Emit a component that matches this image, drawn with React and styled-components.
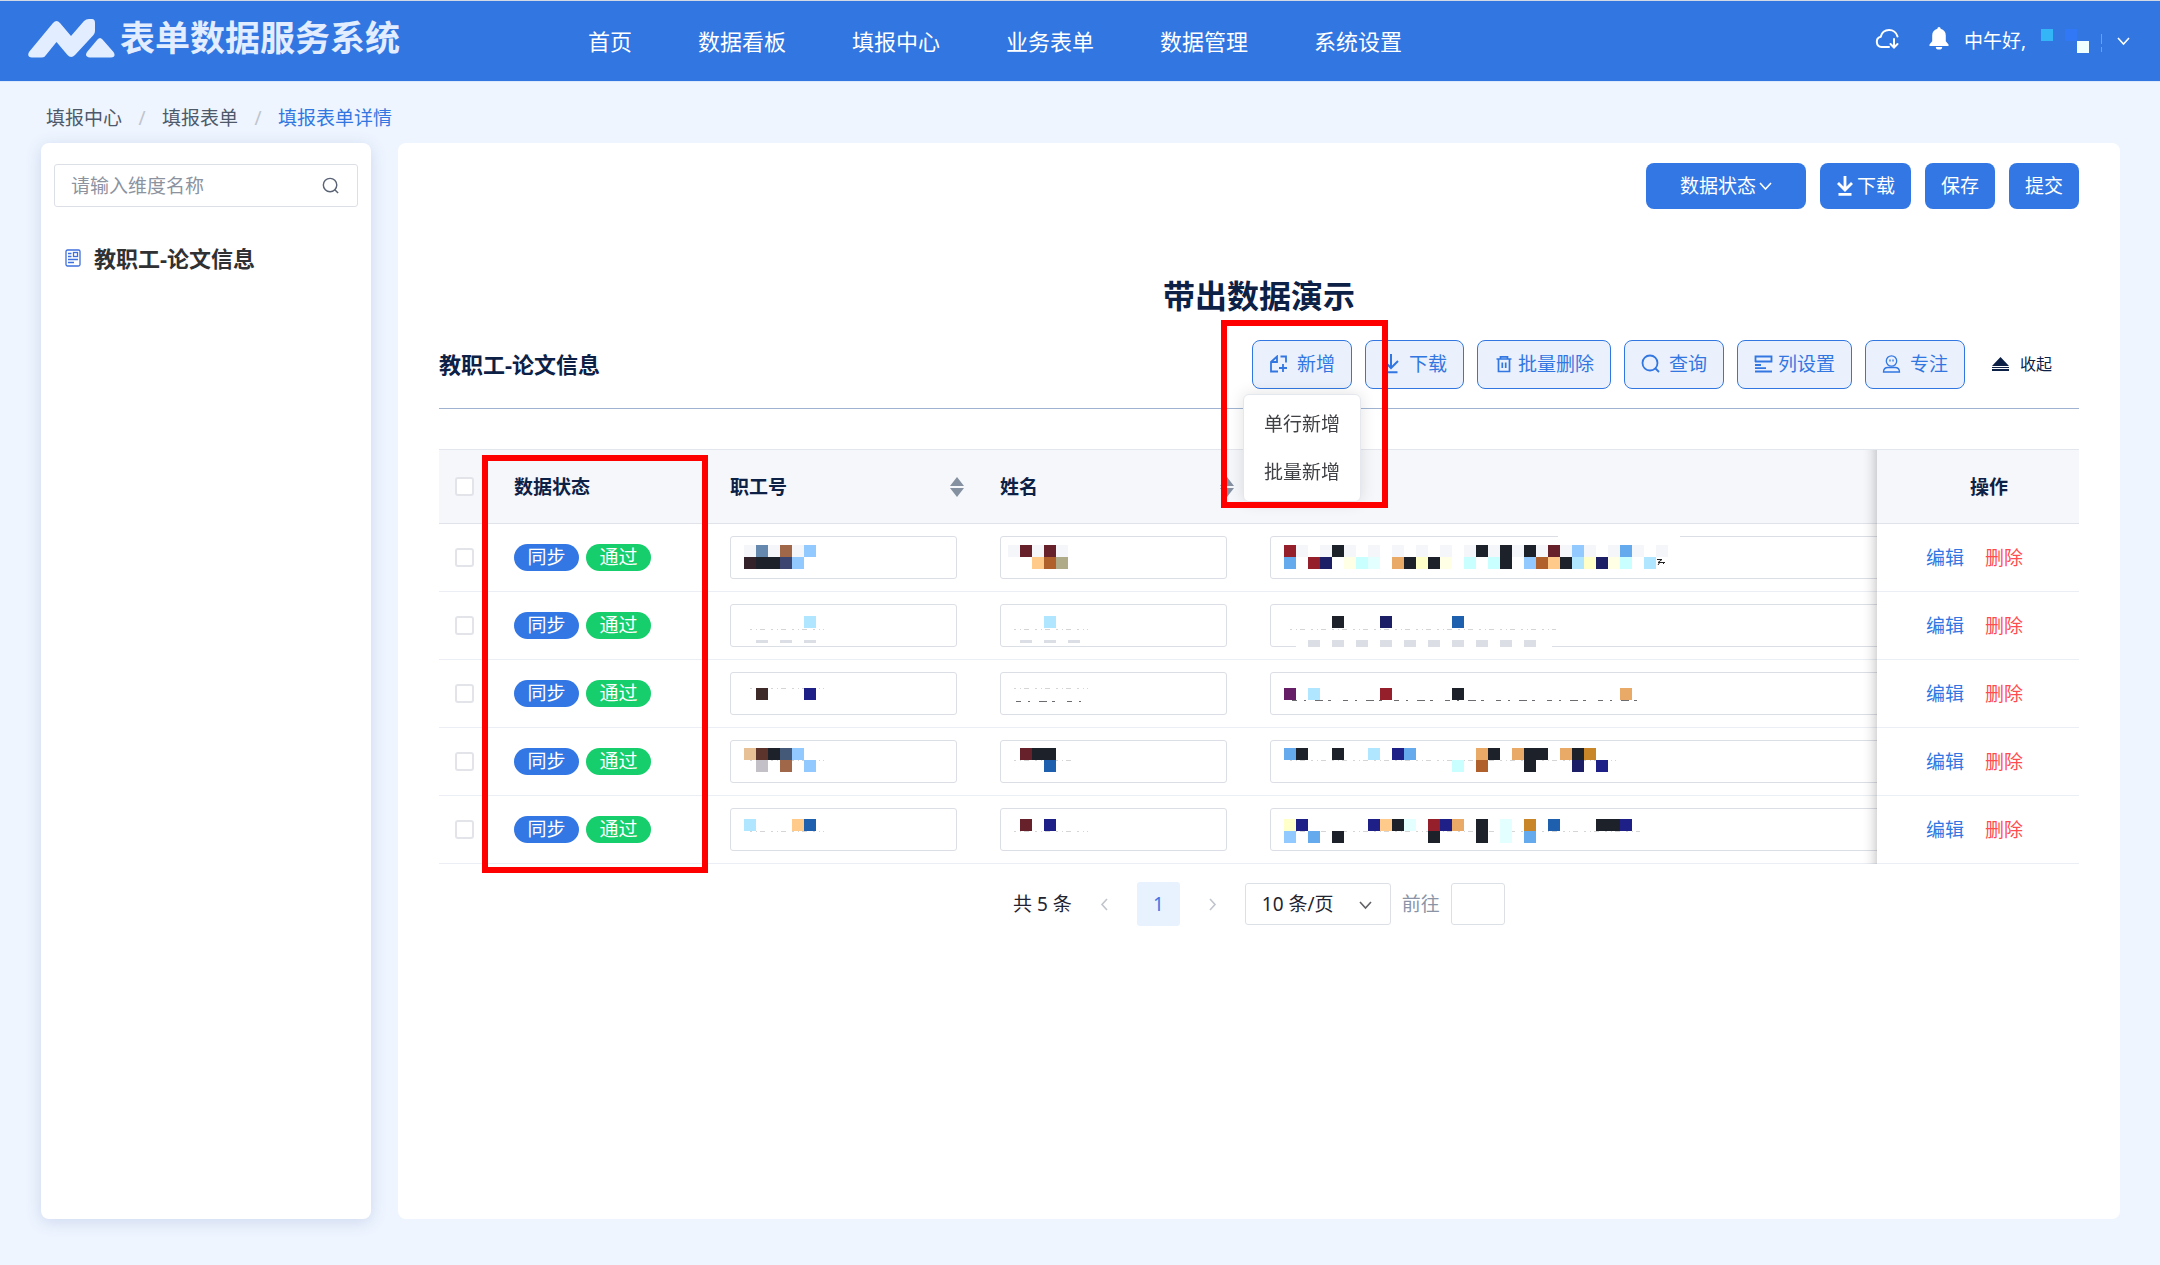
import React, { useState } from 'react';
import styled, { createGlobalStyle } from 'styled-components';

const navItems = ['首页', '数据看板', '填报中心', '业务表单', '数据管理', '系统设置'];

// One letter per 12px block of a masked value
const maskColors = {
  f: '#f5f6fa',
  d: '#1d222a',
  m: '#66212a',
  r: '#951f2a',
  p: '#661f66',
  n: '#1c1f66',
  v: '#1f1f88',
  b: '#1f60ae',
  s: '#66aaee',
  l: '#92caff',
  a: '#b0e6ff',
  c: '#caffff',
  e: '#e4ffff',
  y: '#ffffca',
  w: '#ffffe6',
  o: '#e8aa66',
  t: '#ffca8a',
  k: '#c98628',
  u: '#b0602a',
  q: '#a06848',
  g: '#afaa88',
  i: '#6488ae',
  j: '#3c4470',
  z: '#c4c0c8',
  h: '#dcdee6',
  x: '#33222a',
  D: '#3f2a2a',
  E: '#e8c096',
  F: '#5c342c',
  G: '#445878',
  A: '#33b5f8',
  B: '#3078f5',
  C: '#f0ffff',
};

const rows = [
  {
    id: { top: 9, lines: ['fifqfl', 'xddjl'] },
    name: { top: 9, lines: ['fmfmf', '..tug'] },
    title: {
      top: 9,
      lines: ['rf.fdf.f.f.f.f.fdfdfdfmflf.fsf.f', 's.rn.wce.odydw.c.cd.lutdaynwc.a'],
      erase: { x: 274, y: 0, width: 122 },
      tail: true,
    },
  },
  {
    id: { top: 12, lines: ['.....a'], foot: [1, 3, 5], dash: 25 },
    name: { top: 12, lines: ['...a..'], foot: [1, 3, 5], dash: 25 },
    title: {
      top: 12,
      lines: ['....d...n.....b.......'],
      foot: [2, 4, 6, 8, 10, 12, 14, 16, 18, 20],
      dash: 25,
      erase: { x: 12, y: 42, width: 256 },
    },
  },
  {
    id: { top: 16, lines: ['.D...v'], dash: 16 },
    name: { top: 16, lines: ['......'], dash: 16, ink: 29 },
    title: { top: 16, lines: ['p.a.....r.....d.............o'], ink: 28 },
  },
  {
    id: { top: 8, lines: ['EFdGl', '.z.q.l'], dash: 20 },
    name: { top: 8, lines: ['.mdd.', '...b.'], dash: 20 },
    title: {
      top: 8,
      lines: ['sd..d..a.vs.....od.odd.odk', '..............c.u...d...n.v'],
      dash: 20,
    },
  },
  {
    id: { top: 11, lines: ['a...tb'], dash: 23 },
    name: { top: 11, lines: ['.m.v..'], dash: 23 },
    title: {
      top: 11,
      lines: ['yv.....vtde.rvo.d.e.k.b...ddv', 'l.s.d.......d...d.e.s'],
      dash: 23,
    },
  },
];

const GlobalStyle = createGlobalStyle`
  * {
    box-sizing: border-box;
  }

  body {
    margin: 0;
    background: #eef5ff;
  }

  body, button, input, select {
    font-family: 'Noto Sans', 'Noto Sans CJK SC', sans-serif;
    font-size: 19px;
    line-height: 26px;
  }

  svg {
    display: block;
    flex-shrink: 0;
  }
`;

const Page = styled.div`
  display: flex;
  flex-direction: column;
  min-height: 100vh;
`;

const Header = styled.header`
  display: flex;
  align-items: center;
  height: 82px;
  padding: 0 30px 0 28px;
  border-top: 1px solid #d3dae6;
  border-bottom: 1px solid #dce8fb;
  background: #3176e1;
  color: #fff;
`;

const Brand = styled.a`
  display: flex;
  align-items: center;
  gap: 4px;
  margin: 0 188px 6px 0;
  color: #e2edff;
  font-size: 35px;
  font-weight: 700;
  line-height: 44px;
  text-decoration: none;
  white-space: nowrap;
`;

const Nav = styled.nav`
  display: flex;
  flex: 1;
  gap: 66px;
`;

const NavLink = styled.a`
  color: #fff;
  font-size: 22px;
  line-height: 30px;
  text-decoration: none;
  white-space: nowrap;
`;

const HeaderTools = styled.div`
  display: flex;
  align-items: center;
`;

const IconButton = styled.button`
  display: flex;
  padding: 0;
  margin: 0 15px 6px;
  border: 0;
  background: none;
  color: inherit;
`;

const UserButton = styled.button`
  display: flex;
  align-items: center;
  padding: 0;
  border: 0;
  background: none;
  color: #fff;
  white-space: nowrap;
`;

const Breadcrumb = styled.nav`
  display: flex;
  padding: 23px 46px 12px;
`;

const Crumb = styled.a`
  color: ${(props) => (props.$active ? '#3277e1' : '#4e5969')};
  text-decoration: none;

  &:not(:first-child)::before {
    content: '/';
    display: inline-block;
    width: 40px;
    color: #c0c4cc;
    text-align: center;
  }
`;

const Body = styled.div`
  display: flex;
  flex: 1;
  gap: 27px;
  padding: 0 40px 46px 41px;
`;

const Sidebar = styled.aside`
  width: 330px;
  flex-shrink: 0;
  padding: 21px 13px;
  border-radius: 8px;
  background: #fff;
  box-shadow: 0 3px 16px rgba(60, 90, 160, 0.18);
`;

const SearchBox = styled.label`
  display: flex;
  align-items: center;
  height: 43px;
  padding: 0 18px 0 16px;
  border: 1px solid #dcdfe6;
  border-radius: 3px;
  color: #5a6375;

  input {
    flex: 1;
    min-width: 0;
    padding: 0;
    border: 0;
    outline: 0;
    background: none;
  }

  input::placeholder {
    color: #8c939f;
    opacity: 1;
  }
`;

const TreeItem = styled.a`
  display: flex;
  align-items: center;
  gap: 13px;
  margin-top: 36px;
  padding-left: 11px;
  color: #303133;
  font-size: 22px;
  font-weight: 700;
  line-height: 30px;
  text-decoration: none;
`;

const Main = styled.main`
  flex: 1;
  min-width: 0;
  padding: 20px 41px;
  border-radius: 8px;
  background: #fff;
`;

const Actions = styled.div`
  display: flex;
  justify-content: flex-end;
  gap: 14px;
`;

const PrimaryButton = styled.button`
  display: flex;
  align-items: center;
  justify-content: center;
  gap: 3px;
  min-width: ${(props) => (props.$wide ? '160px' : '70px')};
  height: 46px;
  padding: 0 16px;
  border: 0;
  border-radius: 8px;
  background: #3277e3;
  color: #fff;
`;

const Title = styled.h1`
  margin: 67px 0 24px;
  color: #0d2146;
  font-size: 32px;
  line-height: 40px;
  text-align: center;
`;

const Toolbar = styled.div`
  display: flex;
  align-items: center;
  gap: 13px;
  padding-bottom: 19px;
  border-bottom: 1px solid #9fb3d1;
`;

const SectionTitle = styled.h2`
  flex: 1;
  margin: 0;
  padding-bottom: 2px;
  color: #0d2146;
  font-size: 22px;
  line-height: 30px;
`;

const ToolButton = styled.button`
  display: flex;
  align-items: center;
  gap: ${(props) => (props.$tight ? '5px' : '9px')};
  height: 49px;
  padding: 0 16px 2px;
  border: 1px solid #3277e1;
  border-radius: 8px;
  background: #eaf0fc;
  color: #3277e1;
  white-space: nowrap;
`;

const CollapseButton = styled.button`
  display: flex;
  align-items: center;
  gap: 11px;
  padding: 0 27px 2px 14px;
  border: 0;
  background: none;
  color: #0d2146;
  font-size: 16px;
`;

const Dropdown = styled.div`
  position: relative;
`;

const Menu = styled.ul`
  position: absolute;
  top: 54px;
  left: -9px;
  z-index: 5;
  margin: 0;
  padding: 5px 0;
  border: 1px solid #e4e7ed;
  border-radius: 6px;
  background: #fff;
  box-shadow: 0 0 16px rgba(0, 0, 0, 0.12);
  list-style: none;
`;

const MenuItem = styled.button`
  display: block;
  height: 48px;
  padding: 0 20px;
  border: 0;
  background: none;
  color: #404246;
  white-space: nowrap;
`;

const Highlight = styled.div`
  position: absolute;
  top: ${(props) => props.$top}px;
  left: ${(props) => props.$left}px;
  z-index: 6;
  width: ${(props) => props.$width}px;
  height: ${(props) => props.$height}px;
  border: 6px solid #f00;
  pointer-events: none;
`;

const TableArea = styled.div`
  position: relative;
  margin-top: 40px;
`;

const TableScroll = styled.div`
  overflow-x: auto;
  scrollbar-width: none;
`;

const Table = styled.table`
  width: calc(100% + 270px);
  border-top: 1px solid #e3e6ec;
  border-spacing: 0;
  table-layout: fixed;
`;

const HeadCell = styled.th`
  width: ${(props) => props.$width}px;
  height: 74px;
  padding: 0 16px;
  border-bottom: 1px solid #e0e3ea;
  background: #f5f7fb;
  color: #0d2146;
  font-weight: 700;
  text-align: left;
`;

const HeadInner = styled.div`
  display: flex;
  align-items: center;
  justify-content: space-between;
  padding-right: 4px;
`;

const Cell = styled.td`
  height: 68px;
  padding: 0 16px;
  border-bottom: 1px solid #ebeef5;
  background: #fff;
`;

// Fixed right column with the shadow it throws on the scrolled cells
const fixedColumn = `
  position: sticky;
  right: 0;
  z-index: 2;

  &::before {
    content: '';
    position: absolute;
    top: 0;
    bottom: -1px;
    left: -14px;
    width: 14px;
    box-shadow: inset -14px 0 14px -14px rgba(0, 0, 0, 0.3);
    pointer-events: none;
  }
`;

const FixedHeadCell = styled(HeadCell)`
  ${fixedColumn}
  padding-left: 38px;
  text-align: center;
`;

const FixedCell = styled(Cell)`
  ${fixedColumn}
  padding-left: 49px;
`;

const Checkbox = styled.input`
  display: block;
  appearance: none;
  width: 19px;
  height: 19px;
  margin: 0;
  border: 2px solid #e2e4ea;
  border-radius: 3px;
  background: #fff;
`;

const Tags = styled.div`
  display: flex;
  gap: 7px;
`;

const Tag = styled.span`
  width: 65px;
  height: 27px;
  border-radius: 14px;
  background: ${(props) => (props.$passed ? '#16ce6b' : '#3277e3')};
  color: #fff;
  line-height: 26px;
  text-align: center;
`;

const Field = styled.div`
  position: relative;
  padding-right: ${(props) => (props.$long ? '0' : '11px')};

  input {
    display: block;
    width: 100%;
    height: 43px;
    padding: 0 14px;
    border: 1px solid #dcdee6;
    border-radius: 3px;
    background: #fff;
  }

  svg {
    position: absolute;
    top: 0;
    left: ${(props) => props.$inset}px;
  }
`;

const RowActions = styled.div`
  display: flex;
  gap: 21px;
`;

const RowLink = styled.a`
  color: ${(props) => (props.$danger ? '#ff4d4f' : '#3277e1')};
  text-decoration: none;
`;

const Pagination = styled.div`
  display: flex;
  align-items: center;
  justify-content: center;
  gap: 11px;
  padding-top: 18px;
  color: #1f2430;
`;

const PageButton = styled.button`
  display: flex;
  align-items: center;
  justify-content: center;
  width: 43px;
  height: 44px;
  padding: 0;
  border: 0;
  border-radius: 3px;
  background: ${(props) => (props.$current ? '#e8f2ff' : 'none')};
  color: ${(props) => (props.$current ? '#3f75e2' : '#c0c4cc')};
`;

const SizeSelect = styled.div`
  position: relative;
  color: #606266;

  select {
    appearance: none;
    display: block;
    width: 146px;
    height: 42px;
    padding: 0 16px;
    border: 1px solid #dcdfe6;
    border-radius: 3px;
    background: #fff;
    color: #1f2430;
  }

  svg {
    position: absolute;
    top: 16px;
    right: 19px;
    pointer-events: none;
  }
`;

const JumpLabel = styled.label`
  display: flex;
  align-items: center;
  gap: 11px;
  color: #8a94a6;

  input {
    width: 54px;
    height: 42px;
    border: 1px solid #dcdfe6;
    border-radius: 3px;
  }
`;

const Logo = () => (
  <svg width="88" height="39" viewBox="0 0 88 39" fill="#e2edff">
    <path d="M1 33 25 4Q28.500 0 32 4L43 17 56 2Q58 0 61 0H64Q67 0 67 4V12Q67 14 65.500 16L47 36Q43 40 39.500 36L28.500 23 18 36Q16.500 38.500 14 38.500H4Q-1.500 38 1 33Z" />
    <path d="M59 33 69.500 20.500Q72 17.500 74.500 20.500L85.500 33Q88.500 38 83 38.500H62Q56 38 59 33Z" />
  </svg>
);

const CloudIcon = () => (
  <svg width="24" height="23" viewBox="0 0 24 23" fill="none" stroke="currentColor" strokeWidth="2" strokeLinecap="round">
    <path d="M14 20H6.500a5.200 5.200 0 0 1-.8-10.200A8.600 8.600 0 0 1 22.500 9.500" />
    <path d="M19 12v8M15.500 17l3.500 3.500 3.500-3.500" />
  </svg>
);

const BellIcon = () => (
  <svg width="20" height="23" viewBox="0 0 20 23" fill="currentColor">
    <path d="M10 0a1.600 1.600 0 0 1 1.600 1.700C15 2.500 16.800 5 16.800 8.500v5.700l2.700 3.300V19H.5v-1.500l2.700-3.300V8.500C3.200 5 5 2.500 8.400 1.700A1.600 1.600 0 0 1 10 0ZM6.800 20h6.400a3.200 2.600 0 0 1-6.400 0Z" />
  </svg>
);

const Chevron = ({ width = 13, direction = 'down' }) => {
  const points = {
    down: '1,3 6.500,9 12,3',
    left: '9,1 4,6.500 9,12',
    right: '4,1 9,6.500 4,12',
  };
  return (
    <svg width={width} height={width} viewBox="0 0 13 13" fill="none" stroke="currentColor" strokeWidth="1.600">
      <polyline points={points[direction]} />
    </svg>
  );
};

const SearchIcon = ({ size = 19, weight = 1.8 }) => (
  <svg width={size} height={size} viewBox="0 0 19 19" fill="none" stroke="currentColor" strokeWidth={weight}>
    <circle cx="9" cy="9" r="7.500" />
    <path d="M14 14l4 4" />
  </svg>
);

const FormIcon = () => (
  <svg width="16" height="18" viewBox="0 0 16 18" fill="none" stroke="#3f6fdc" strokeWidth="1.300">
    <rect x="1" y="1" width="14" height="16" rx="1.500" />
    <rect x="8.500" y="3.500" width="4" height="4" />
    <path d="M3 4.500h3.500M3 7.500h3.500M3 10.500h10M3 13.500h6" />
  </svg>
);

const DownloadIcon = ({ bold }) => (
  <svg width="18" height="20" viewBox="0 0 18 20" fill="none" stroke="currentColor" strokeWidth={bold ? 2.8 : 2}>
    <path d="M9 0v14M2 7l7 7 7-7M2.500 18.300h13" />
  </svg>
);

const AddIcon = () => (
  <svg width="19" height="18" viewBox="0 0 19 18" fill="none" stroke="currentColor" strokeWidth="1.800">
    <path d="M9 16.500H2V7l6-5.500v5.500H2M11.500 1.500H17v6M14 9v8M10 13h8" />
  </svg>
);

const TrashIcon = () => (
  <svg width="19" height="18" viewBox="0 0 19 18" fill="none" stroke="currentColor" strokeWidth="1.700">
    <path d="M2.500 4h15M6.500 4V1.800h7V4M4.500 4v12.500h11V4M8.300 7.500v5.500M11.700 7.500v5.500" />
  </svg>
);

const ColumnsIcon = () => (
  <svg width="19" height="18" viewBox="0 0 19 18" fill="none" stroke="currentColor" strokeWidth="1.800">
    <path d="M1.500 7V1.500h16V6.500H1M1 10h6M1 13.200h11M1 16.500h17" />
  </svg>
);

const FocusIcon = () => (
  <svg width="19" height="18" viewBox="0 0 19 18" fill="none" stroke="currentColor" strokeWidth="1.300">
    <circle cx="9.500" cy="6" r="5.200" />
    <path d="M8 4.500v2M11 4.500v2M6 12.500h7q4.500 0 4.500 4.500h-16q0-4.500 4.500-4.500Z" />
  </svg>
);

const CollapseIcon = () => (
  <svg width="17" height="14" viewBox="0 0 17 14" fill="currentColor">
    <path d="M8.500 0 17 9H0ZM0 10h17v1H0ZM0 12h17v2H0Z" />
  </svg>
);

const SortIcon = () => (
  <svg width="14" height="20" viewBox="0 0 14 20" fill="#8590a0">
    <path d="M7 0l7 9H0ZM7 20l7-9H0Z" />
  </svg>
);

const Mask = ({ top, lines, foot = [], dash, ink, erase, tail }) => {
  const columns = Math.max(...lines.map((line) => line.length));
  const width = columns * 12 + 8;
  return (
    <svg width={width} height="43" overflow="visible" aria-hidden="true">
      {erase && <rect x={erase.x} y={erase.y} width={erase.width} height="1" fill="#fff" />}
      {dash && <path d={`M6 ${dash}.5H${width}`} stroke="#d5d5d5" strokeDasharray="2 4 1 3 5 6" />}
      {ink && <path d={`M8 ${ink}.5H${width}`} stroke="#6b6b70" strokeDasharray="5 7 2 9 8 5 3 12" />}
      {lines.map((line, y) =>
        line.split('').map((letter, x) =>
          letter === '.' ? null : (
            <rect key={`${x}-${y}`} x={x * 12} y={top + y * 12} width="12" height="12" fill={maskColors[letter]} />
          )
        )
      )}
      {foot.map((x) => (
        <rect key={x} x={x * 12} y="36" width="12" height={foot.length > 3 ? 7 : 3} fill={maskColors.h} />
      ))}
      {tail && <path d="M373 23.500h5l-4 3h7M376 26l-2 3M378 26l2 2" fill="none" stroke="#222" />}
    </svg>
  );
};

const MaskedField = ({ label, mask, inset, long }) => (
  <Field $inset={inset} $long={long}>
    <input type="text" aria-label={label} />
    <Mask {...mask} />
  </Field>
);

const App = () => {
  const [selected, setSelected] = useState([]);

  const toggleRow = (index) => {
    setSelected(
      selected.includes(index) ? selected.filter((item) => item !== index) : [...selected, index]
    );
  };

  const toggleAll = () => {
    setSelected(selected.length === rows.length ? [] : rows.map((row, index) => index));
  };

  return (
    <Page>
      <GlobalStyle />
      <Header>
        <Brand href="#">
          <Logo />
          表单数据服务系统
        </Brand>
        <Nav>
          {navItems.map((item) => (
            <NavLink href="#" key={item}>{item}</NavLink>
          ))}
        </Nav>
        <HeaderTools>
          <IconButton aria-label="下载任务"><CloudIcon /></IconButton>
          <IconButton aria-label="消息"><BellIcon /></IconButton>
          <UserButton>
            中午好,
            <svg width="91" height="26" aria-hidden="true">
              <rect x="15" y="1" width="12" height="12" fill={maskColors.A} />
              <rect x="39" y="1" width="12" height="12" fill={maskColors.B} />
              <rect x="51" y="13" width="12" height="12" fill={maskColors.C} />
              <path d="M75.500 6v10M75.500 19v5" stroke="#6d9ff0" />
            </svg>
            <Chevron />
          </UserButton>
        </HeaderTools>
      </Header>

      <Breadcrumb>
        <Crumb href="#">填报中心</Crumb>
        <Crumb href="#">填报表单</Crumb>
        <Crumb href="#" $active>填报表单详情</Crumb>
      </Breadcrumb>

      <Body>
        <Sidebar>
          <SearchBox>
            <input type="text" placeholder="请输入维度名称" aria-label="维度名称" />
            <SearchIcon size={17} weight={1.6} />
          </SearchBox>
          <TreeItem href="#">
            <FormIcon />
            教职工-论文信息
          </TreeItem>
        </Sidebar>

        <Main>
          <Actions>
            <PrimaryButton $wide>数据状态<Chevron /></PrimaryButton>
            <PrimaryButton><DownloadIcon bold />下载</PrimaryButton>
            <PrimaryButton>保存</PrimaryButton>
            <PrimaryButton>提交</PrimaryButton>
          </Actions>

          <Title>带出数据演示</Title>

          <Toolbar>
            <SectionTitle>教职工-论文信息</SectionTitle>
            <Dropdown>
              <ToolButton><AddIcon />新增</ToolButton>
              <Menu>
                <li><MenuItem>单行新增</MenuItem></li>
                <li><MenuItem>批量新增</MenuItem></li>
              </Menu>
              <Highlight $top={-20} $left={-31} $width={167} $height={188} />
            </Dropdown>
            <ToolButton><DownloadIcon />下载</ToolButton>
            <ToolButton $tight><TrashIcon />批量删除</ToolButton>
            <ToolButton><SearchIcon />查询</ToolButton>
            <ToolButton $tight><ColumnsIcon />列设置</ToolButton>
            <ToolButton><FocusIcon />专注</ToolButton>
            <CollapseButton><CollapseIcon />收起</CollapseButton>
          </Toolbar>

          <TableArea>
            <TableScroll>
              <Table>
                <thead>
                  <tr>
                    <HeadCell $width={59}>
                      <Checkbox
                        type="checkbox"
                        aria-label="全选"
                        checked={selected.length === rows.length}
                        onChange={toggleAll}
                      />
                    </HeadCell>
                    <HeadCell $width={216}>数据状态</HeadCell>
                    <HeadCell $width={270}>
                      <HeadInner>职工号<SortIcon /></HeadInner>
                    </HeadCell>
                    <HeadCell $width={270}>
                      <HeadInner>姓名<SortIcon /></HeadInner>
                    </HeadCell>
                    <HeadCell />
                    <FixedHeadCell $width={202}>操作</FixedHeadCell>
                  </tr>
                </thead>
                <tbody>
                  {rows.map((row, index) => (
                    <tr key={index}>
                      <Cell>
                        <Checkbox
                          type="checkbox"
                          aria-label="选择"
                          checked={selected.includes(index)}
                          onChange={() => toggleRow(index)}
                        />
                      </Cell>
                      <Cell>
                        <Tags>
                          <Tag>同步</Tag>
                          <Tag $passed>通过</Tag>
                        </Tags>
                      </Cell>
                      <Cell><MaskedField label="职工号" mask={row.id} inset={14} /></Cell>
                      <Cell><MaskedField label="姓名" mask={row.name} inset={8} /></Cell>
                      <Cell><MaskedField label="论文题目" mask={row.title} inset={14} long /></Cell>
                      <FixedCell>
                        <RowActions>
                          <RowLink href="#">编辑</RowLink>
                          <RowLink href="#" $danger>删除</RowLink>
                        </RowActions>
                      </FixedCell>
                    </tr>
                  ))}
                </tbody>
              </Table>
            </TableScroll>
            <Highlight $top={6} $left={43} $width={226} $height={418} />
          </TableArea>

          <Pagination>
            <span>共 5 条</span>
            <PageButton aria-label="上一页"><Chevron direction="left" /></PageButton>
            <PageButton $current>1</PageButton>
            <PageButton aria-label="下一页"><Chevron direction="right" /></PageButton>
            <SizeSelect>
              <select aria-label="每页条数">
                <option>10 条/页</option>
              </select>
              <Chevron />
            </SizeSelect>
            <JumpLabel>
              前往
              <input type="text" />
            </JumpLabel>
          </Pagination>
        </Main>
      </Body>
    </Page>
  );
};

export default App;
